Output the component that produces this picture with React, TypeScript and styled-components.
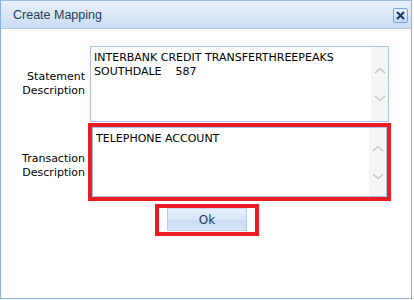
import styled, { createGlobalStyle } from 'styled-components';

const Global = createGlobalStyle`
  html, body {
    margin: 0;
    padding: 0;
    background: #ffffff;
  }
  body {
    font-family: Tahoma, "DejaVu Sans", Verdana, sans-serif;
  }
`;

const Window = styled.div`
  width: 410px;
  height: 297px;
  border: 1px solid #8db2e3;
  border-top-color: #99bbe8;
  background: #ffffff;
  display: flex;
  flex-direction: column;
`;

const TitleBar = styled.div`
  height: 28px;
  flex: none;
  display: flex;
  align-items: center;
  justify-content: space-between;
  padding: 0 3px 0 12px;
  background: linear-gradient(to bottom, #e7f0fb 0%, #dbe8f8 45%, #c9dcf3 100%);
  border-bottom: 1px solid #b3cbe8;
  box-sizing: border-box;
`;

const Title = styled.span`
  font-family: "Liberation Sans", Arial, sans-serif;
  font-size: 12.5px;
  color: #1f3a5e;
`;

const CloseButton = styled.div`
  width: 13px;
  height: 13px;
  border: 1px solid #7ea4d6;
  border-radius: 2px;
  background: linear-gradient(to bottom, #eaf3ff, #c3d9f5);
  display: flex;
  align-items: center;
  justify-content: center;
  margin-top: 2px;
`;

const Body = styled.div`
  flex: 1;
  display: flex;
  flex-direction: column;
  padding: 17px 22px 0 0;
`;

const Row = styled.div<{ $gap: number }>`
  display: grid;
  grid-template-columns: 89px 1fr;
  align-items: center;
  margin-bottom: ${(p) => p.$gap}px;
`;

const Label = styled.div<{ $shift?: number }>`
  font-size: 11px;
  line-height: 14px;
  color: #000;
  text-align: right;
  padding-right: 5px;
  padding-top: ${(p) => p.$shift ?? 0}px;
`;

const Highlight = styled.div<{ $on?: boolean }>`
  border: ${(p) => (p.$on ? '4px solid #ec1c24' : '0')};
  margin: ${(p) => (p.$on ? '0 -2px' : '0')};
`;

const TextBox = styled.div<{ $h: number }>`
  height: ${(p) => p.$h}px;
  border: 1px solid #a9c3e6;
  background: #fff;
  display: flex;
  box-sizing: border-box;
`;

const TextContent = styled.div`
  flex: 1;
  padding: 4px 3px;
  font-size: 11px;
  line-height: 14px;
  color: #000;
  white-space: pre-wrap;
`;

const ScrollBar = styled.div`
  width: 17px;
  background: #f5f5f5;
  display: flex;
  flex-direction: column;
  justify-content: center;
  align-items: center;
  gap: 21px;
`;

const Footer = styled.div`
  display: flex;
  justify-content: center;
  padding-left: 24px;
`;

const ButtonFrame = styled.div`
  border: 4px solid #ec1c24;
  padding: 0 8px 1px;
  background: #fff;
`;

const OkButton = styled.button`
  display: block;
  width: 80px;
  height: 23px;
  border: 1px solid #b6cde9;
  border-top-color: #c5d8ef;
  background: linear-gradient(to bottom, #e6f0fc 0%, #d7e6f8 50%, #c7dbf4 51%, #d6e5f7 100%);
  font-family: Tahoma, "DejaVu Sans", Verdana, sans-serif;
  font-size: 12px;
  color: #1f3a5e;
  padding: 0;
`;

function Chevron({ up }: { up?: boolean }) {
  return (
    <svg width='12' height='7' viewBox='0 0 12 7'>
      <path
        d={up ? 'M1 6 L6 1.5 L11 6' : 'M1 1 L6 5.5 L11 1'}
        fill='none'
        stroke='#c6c6c6'
        strokeWidth='1.4'
      />
    </svg>
  );
}

function Field({ text, height }: { text: string; height: number }) {
  return (
    <TextBox $h={height}>
      <TextContent>{text}</TextContent>
      <ScrollBar>
        <Chevron up />
        <Chevron />
      </ScrollBar>
    </TextBox>
  );
}

export default function App() {
  return (
    <>
      <Global />
      <Window>
        <TitleBar>
          <Title>Create Mapping</Title>
          <CloseButton>
            <svg width='9' height='9' viewBox='0 0 9 9'>
              <path d='M1 1 L8 8 M8 1 L1 8' stroke='#1d3a62' strokeWidth='2.2' />
            </svg>
          </CloseButton>
        </TitleBar>
        <Body>
          <Row $gap={1}>
            <Label>
              Statement
              <br />
              Description
            </Label>
            <Highlight>
              <Field
                height={76}
                text={'INTERBANK CREDIT TRANSFERTHREEPEAKS\nSOUTHDALE    587'}
              />
            </Highlight>
          </Row>
          <Row $gap={3}>
            <Label $shift={7}>
              Transaction
              <br />
              Description
            </Label>
            <Highlight $on>
              <Field height={70} text='TELEPHONE ACCOUNT' />
            </Highlight>
          </Row>
          <Footer>
            <ButtonFrame>
              <OkButton>Ok</OkButton>
            </ButtonFrame>
          </Footer>
        </Body>
      </Window>
    </>
  );
}
